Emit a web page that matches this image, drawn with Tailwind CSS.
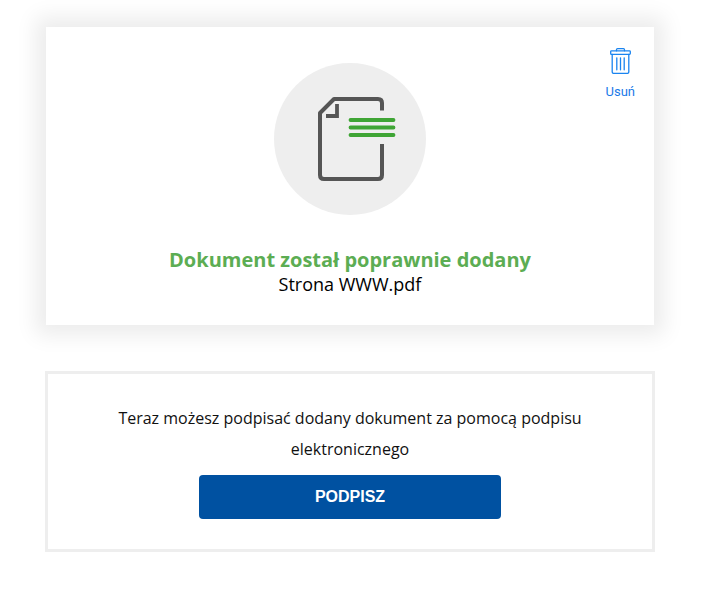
<!DOCTYPE html>
<html lang="pl">
<head>
<meta charset="utf-8">
<script src="https://cdn.jsdelivr.net/npm/@tailwindcss/browser@4"></script>
</head>
<body class="bg-white font-['Open_Sans',sans-serif] overflow-hidden">
<div class="w-[715px] h-[589px] pl-[45px] pr-[60px] pt-[27px]">
  <section class="relative mx-[1px] h-[298px] bg-white shadow-[0_0_20px_10px_rgba(0,0,0,0.08)] flex flex-col items-center pt-[36px]">
    <a class="absolute right-[19px] top-[21px] flex flex-col items-center">
      <svg class="block" width="21" height="26" viewBox="0 0 21 26" fill="none" stroke="#1a84f0" stroke-width="1.300" stroke-linejoin="round" stroke-linecap="round">
        <path d="M6.500 2.800V1.700C6.500 1 7 .7 7.500.7H13.500C14 .7 14.500 1 14.500 1.700V2.800"/>
        <rect x=".7" y="2.800" width="19.600" height="3.600" rx=".8"/>
        <path d="M2.200 6.400V24C2.200 24.900 2.800 25.400 3.600 25.400H17.400C18.200 25.400 18.800 24.900 18.800 24V6.400"/>
        <path d="M6.800 9.800V21.800M10.500 9.800V21.800M14.200 9.800V21.800"/>
      </svg>
      <span class="mt-[9px] text-[13px] leading-[18px] font-['Roboto',sans-serif] text-[#1a7ae8]">Usuń</span>
    </a>
    <div class="w-[152px] h-[152px] rounded-full bg-[#eeeeee] flex items-center justify-center">
      <svg width="152" height="152" viewBox="0 0 152 152" fill="none">
        <path d="M108 47.500V40C108 37.500 106.500 36 104 36H60L46 50V112C46 114.500 47.500 116 50 116H104C106.500 116 108 114.500 108 112V81" stroke="#555555" stroke-width="4" stroke-linejoin="round"/>
        <path d="M63 41V53H52" stroke="#555555" stroke-width="3.800"/>
        <path d="M76.500 57H119.500M76.500 64.500H119.500M76.500 72H119.500" stroke="#3fa535" stroke-width="3.800" stroke-linecap="round"/>
      </svg>
    </div>
    <h1 class="mt-[32px] text-[20px] leading-[26px] font-bold text-[#5cad53]">Dokument został poprawnie dodany</h1>
    <p class="-mt-[1px] text-[18px] leading-[24px] text-black">Strona WWW.pdf</p>
  </section>
  <section class="mt-[46px] h-[181px] border-[3px] border-[#eeeeee] flex flex-col items-center pt-[29px]">
    <p class="w-[480px] text-center text-[16px] leading-[31px] text-[#111111]">Teraz możesz podpisać dodany dokument za pomocą podpisu elektronicznego</p>
    <button class="mt-[10px] w-[302px] h-[44px] rounded-[4px] bg-[#0051a1] text-white text-[16px] font-bold font-['Liberation_Sans',sans-serif]">PODPISZ</button>
  </section>
</div>
</body>
</html>
